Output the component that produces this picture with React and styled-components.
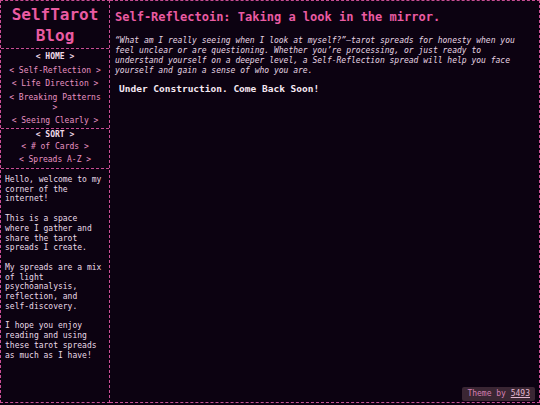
import React from "react";
import styled, { createGlobalStyle } from "styled-components";

const GlobalStyle = createGlobalStyle`
    html, body {
        margin: 0;
        padding: 0;
        background: #0c0211;
    }
    body {
        font-family: "DejaVu Sans Mono", "Liberation Mono", monospace;
        color: #eadbe8;
    }
`;

const Page = styled.div`
    display: flex;
    width: 540px;
    height: 403px;
`;

const Sidebar = styled.aside`
    width: 108px;
    flex: none;
    display: flex;
    flex-direction: column;
    border: 1px dashed #c94d94;
`;

const Section = styled.div`
    border-top: ${(p) => (p.first ? "none" : "1px dashed #c94d94")};
    padding: ${(p) => p.pad || "0"};
    flex: ${(p) => (p.grow ? "1" : "none")};
    text-align: ${(p) => (p.left ? "left" : "center")};
`;

const BlogTitle = styled.h1`
    margin: 0;
    font-size: 16px;
    line-height: 21px;
    font-weight: bold;
    color: #ea5ba2;
`;

const NavList = styled.ul`
    list-style: none;
    margin: 0;
    padding: 0;
`;

const NavItem = styled.li`
    font-size: 8px;
    line-height: 10px;
    margin-bottom: ${(p) => p.gap || "3.5px"};
    color: ${(p) => (p.head ? "#f3dbe9" : "#e892c2")};
    font-weight: ${(p) => (p.head ? "bold" : "normal")};
`;

const About = styled.p`
    margin: 0 0 10px 0;
    font-size: 8px;
    line-height: 9.7px;
`;

const Main = styled.main`
    flex: 1;
    border: 1px dashed #c94d94;
    border-left: none;
    padding: 9px 6px 0 5px;
`;

const Heading = styled.h2`
    margin: 0 0 11px 0;
    font-size: 12px;
    line-height: 15px;
    font-weight: bold;
    color: #ea5ba2;
`;

const Intro = styled.p`
    margin: 0 0 7px 0;
    font-size: 8px;
    line-height: 10px;
    font-style: italic;
    color: #e6d5e2;
`;

const Notice = styled.h3`
    margin: 0;
    padding-left: 4px;
    font-size: 9.5px;
    line-height: 12px;
    font-weight: bold;
    color: #f6e8f2;
`;

const Credit = styled.div`
    position: fixed;
    right: 5px;
    bottom: 4px;
    padding: 2px 5px;
    font-size: 8px;
    line-height: 10px;
    background: #3a2633;
    color: #d47fb2;
    border-radius: 2px;

    & a {
        color: #e4b8d2;
        text-decoration: underline;
    }
`;

export default function App() {
    return (
        <>
            <GlobalStyle />
            <Page>
                <Sidebar>
                    <Section first pad="3px 0 2px 0">
                        <BlogTitle>
                            SelfTarot
                            <br />
                            Blog
                        </BlogTitle>
                    </Section>
                    <Section pad="3px 5px 0 5px">
                        <NavList>
                            <NavItem head>&lt; HOME &gt;</NavItem>
                            <NavItem>&lt; Self-Reflection &gt;</NavItem>
                            <NavItem>&lt; Life Direction &gt;</NavItem>
                            <NavItem>&lt; Breaking Patterns &gt;</NavItem>
                            <NavItem gap="2px">&lt; Seeing Clearly &gt;</NavItem>
                        </NavList>
                    </Section>
                    <Section pad="1px 5px 0 5px">
                        <NavList>
                            <NavItem head gap="2px">&lt; SORT &gt;</NavItem>
                            <NavItem gap="3px">&lt; # of Cards &gt;</NavItem>
                            <NavItem gap="3px">&lt; Spreads A-Z &gt;</NavItem>
                        </NavList>
                    </Section>
                    <Section grow left pad="6px 4px 0 4px">
                        <About>
                            Hello, welcome to my corner of the internet!
                        </About>
                        <About>
                            This is a space where I gather and share the tarot
                            spreads I create.
                        </About>
                        <About>
                            My spreads are a mix of light psychoanalysis,
                            reflection, and self-discovery.
                        </About>
                        <About>
                            I hope you enjoy reading and using these tarot
                            spreads as much as I have!
                        </About>
                    </Section>
                </Sidebar>
                <Main>
                    <Heading>Self-Reflectoin: Taking a look in the mirror.</Heading>
                    <Intro>
                        “What am I really seeing when I look at myself?”—tarot
                        spreads for honesty when you feel unclear or are
                        questioning. Whether you’re processing, or just ready to
                        understand yourself on a deeper level, a Self-Reflection
                        spread will help you face yourself and gain a sense of
                        who you are.
                    </Intro>
                    <Notice>Under Construction. Come Back Soon!</Notice>
                </Main>
            </Page>
            <Credit>
                Theme by <a>5493</a>
            </Credit>
        </>
    );
}
